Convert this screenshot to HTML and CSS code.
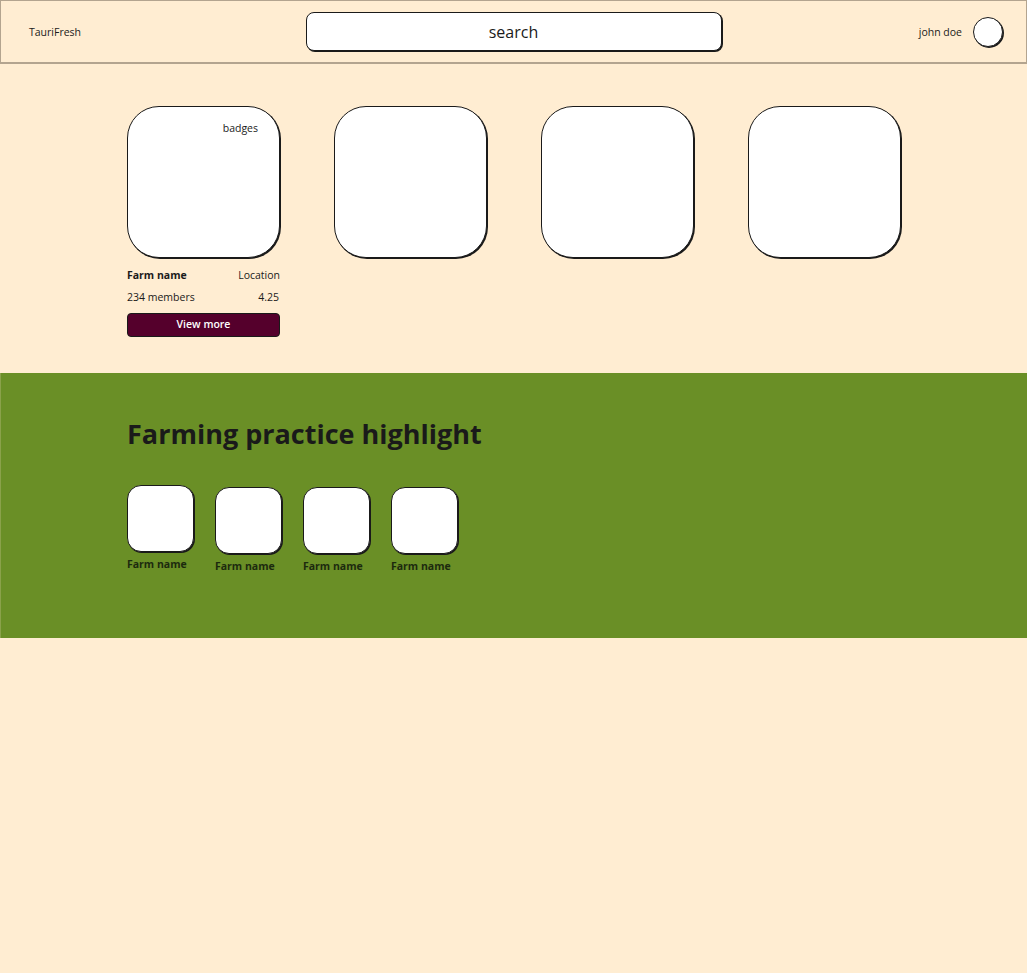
FILE: index.html
```html
<!DOCTYPE html>
<html lang="en">
<head>
<meta charset="utf-8">
<title>TauriFresh</title>
<link rel="stylesheet" href="styles.css">
</head>
<body>
<header class="topbar">
  <div class="brand">TauriFresh</div>
  <div class="search">search</div>
  <div class="user"><span>john doe</span><div class="avatar"></div></div>
</header>
<section class="farms">
  <article class="farm">
    <div class="tile tile-lg"><span class="badges">badges</span></div>
    <div class="row first"><b>Farm name</b><span>Location</span></div>
    <div class="row second"><span>234 members</span><span class="rating">4.25</span></div>
    <button class="more">View more</button>
  </article>
  <article class="farm"><div class="tile tile-lg"></div></article>
  <article class="farm"><div class="tile tile-lg"></div></article>
  <article class="farm"><div class="tile tile-lg"></div></article>
</section>
<section class="practice">
  <h2>Farming practice highlight</h2>
  <div class="thumbs">
    <div class="thumb raised"><div class="tile tile-sm"></div><b>Farm name</b></div>
    <div class="thumb"><div class="tile tile-sm"></div><b>Farm name</b></div>
    <div class="thumb"><div class="tile tile-sm"></div><b>Farm name</b></div>
    <div class="thumb"><div class="tile tile-sm"></div><b>Farm name</b></div>
  </div>
</section>
</body>
</html>
```
FILE: styles.css
```css
* { box-sizing: border-box; }
html, body { margin: 0; padding: 0; }
body { background: #ffedd2; color: #1a1a1a; font-family: "Open Sans", sans-serif; height: 973px; overflow: hidden; font-size: 10.5px; }
.topbar { height: 64px; border: 1px solid #b3a48f; border-bottom-width: 2px; display: flex; align-items: center; padding: 0 22px 0 28px; }
.brand { width: 277px; }
.search { width: 416px; height: 39px; background: #fff; border: 1px solid #1a1a1a; box-shadow: 1px 1px 0 #1a1a1a; border-radius: 8px; display: flex; align-items: center; justify-content: center; padding-right: 1px; font-size: 16px; margin-right: 1px; }
.user { flex: 1; display: flex; justify-content: flex-end; align-items: center; gap: 11px; }
.avatar { width: 30px; height: 30px; margin-right: 1px; background: #fff; border: 1px solid #1a1a1a; box-shadow: 1px 1px 0 #1a1a1a; border-radius: 50%; }
.farms { height: 309px; display: flex; gap: 54px; padding: 42px 0 0 127px; }
.farm { width: 153px; display: flex; flex-direction: column; }
.tile { background: #fff; border: 1px solid #1a1a1a; box-shadow: 1px 1px 0 #1a1a1a; }
.tile-lg { width: 153px; height: 152px; border-radius: 32px; position: relative; }
.badges { position: absolute; top: 14px; right: 21px; }
.row { display: flex; justify-content: space-between; line-height: 15px; }
.first { margin-top: 10px; }
.second { margin-top: 7px; }
.rating { margin-right: 1px; }
.more { margin-top: 8px; height: 24px; width: 153px; background: #55002c; color: #fff; border: 1px solid #1a1a1a; border-radius: 4px; font: 600 10.5px "Open Sans", sans-serif; padding: 0 0 2px; }
.practice { height: 265px; background: #6a8f26; border-left: 1px solid #8aa24a; padding: 41px 0 0 126px; }
h2 { margin: 0; font-size: 27px; line-height: 40px; font-weight: 700; }
.thumbs { display: flex; gap: 20px; margin-top: 31px; }
.thumb { width: 68px; display: flex; flex-direction: column; margin-top: 2px; }
.thumb.raised { margin-top: 0; }
.tile-sm { width: 67px; height: 67px; border-radius: 14px; }
.thumb b { font-size: 10.5px; line-height: 14px; margin-top: 5px; white-space: nowrap; color: #1c2a0e; }
```
